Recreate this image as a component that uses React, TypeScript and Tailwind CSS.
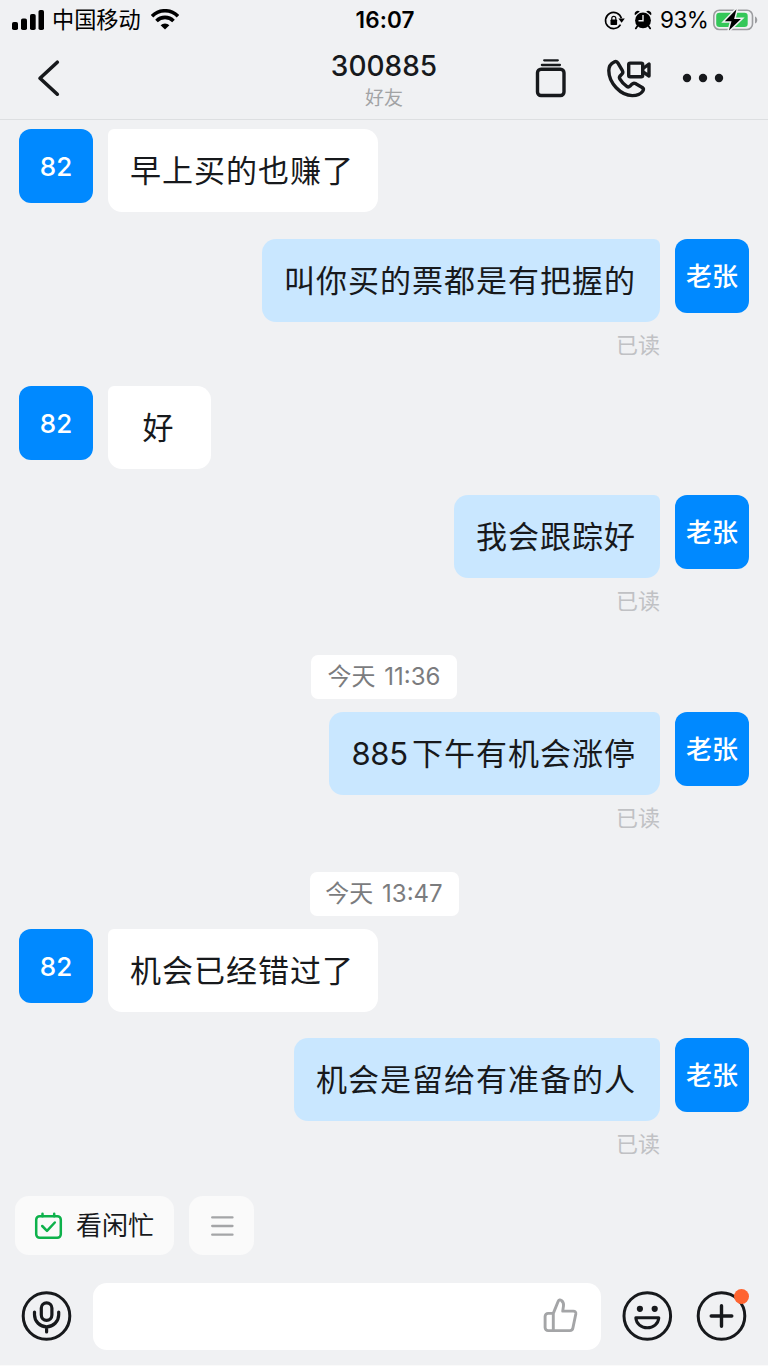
import type { ReactNode } from "react";

type ChatItem =
  | { kind: "time"; text: string; className: string }
  | { kind: "in" | "out"; text: ReactNode; className: string };

const items: ChatItem[] = [
  { kind: "in", text: "早上买的也赚了", className: "" },
  { kind: "out", text: "叫你买的票都是有把握的", className: "mt-[27px]" },
  { kind: "in", text: "好", className: "mt-[26px]" },
  { kind: "out", text: "我会跟踪好", className: "mt-[26px]" },
  { kind: "time", text: "今天 11:36", className: "mt-[39px] w-[146px]" },
  {
    kind: "out",
    text: (
      <>
        <span className="mr-[4px] tracking-[-0.2px]">885</span>下午有机会涨停
      </>
    ),
    className: "mt-[13px]",
  },
  { kind: "time", text: "今天 13:47", className: "mt-[39px] w-[149px]" },
  { kind: "in", text: "机会已经错过了", className: "mt-[13px]" },
  { kind: "out", text: "机会是留给有准备的人", className: "mt-[26px]" },
];

function Avatar({ children }: { children: ReactNode }) {
  return (
    <div className="flex h-[74px] w-[74px] shrink-0 justify-center rounded-[12px] bg-[#0089ff] pt-[20px] text-[26px] leading-[36px] font-medium text-white">
      {children}
    </div>
  );
}

function Message({ item }: { item: ChatItem }) {
  if (item.kind === "time") {
    return (
      <div
        className={`mx-auto flex h-[44px] items-center justify-center rounded-[7px] bg-white text-[24px] leading-[44px] whitespace-nowrap text-[#7b7c7e] [word-spacing:2px] ${item.className}`}
      >
        {item.text}
      </div>
    );
  }

  if (item.kind === "in") {
    return (
      <div className={`flex gap-[15px] ${item.className}`}>
        <Avatar>82</Avatar>
        <div className="h-[83px] min-w-[103px] rounded-[14px] rounded-tl-[6px] bg-white pr-[24px] pl-[22px] text-center text-[31px] leading-[84px] tracking-[1px] whitespace-nowrap">
          {item.text}
        </div>
      </div>
    );
  }

  return (
    <div className={`flex justify-end gap-[15px] ${item.className}`}>
      <div className="flex flex-col items-end">
        <div className="h-[83px] rounded-[14px] rounded-tr-[6px] bg-[#c9e7ff] pr-[24px] pl-[22px] text-[31px] leading-[84px] tracking-[1px] whitespace-nowrap">
          {item.text}
        </div>
        <span className="mt-[5px] h-[33px] text-[22px] leading-[36px] text-[#c0c1c4]">已读</span>
      </div>
      <Avatar>老张</Avatar>
    </div>
  );
}

function StatusBar() {
  return (
    <div className="flex h-[40px] items-center text-black">
      <div className="flex flex-1 items-center pl-[12px]">
        <svg width="32" height="22" viewBox="12 8 32 22">
          <rect x="12" y="21" width="6" height="8" rx="1.8" />
          <rect x="21" y="17.5" width="6" height="11.5" rx="1.8" />
          <rect x="30" y="13" width="5.7" height="16" rx="1.8" />
          <rect x="38.5" y="9" width="5.5" height="20" rx="1.8" />
        </svg>
        <span className="ml-[8px] text-[22.2px] leading-[38px]">中国移动</span>
        <svg className="ml-[10px]" width="28" height="22" viewBox="151 8 28 22" fill="none" stroke="currentColor">
          <path d="M152 15.2a18.2 18.2 0 0 1 26 0" strokeWidth="3.6" />
          <path d="M156.5 20a11.8 11.8 0 0 1 17 0" strokeWidth="3.6" />
          <path d="M160.6 24.3a6 6 0 0 1 8.8 0L165 28.6Z" fill="currentColor" stroke="none" />
        </svg>
      </div>
      <span className="text-[22.5px] leading-[38px] font-semibold tracking-[0.1px]">16:07</span>
      <div className="flex flex-1 items-center justify-end pr-[10px]">
        <svg width="22" height="22" viewBox="604 8 22 22" fill="none" stroke="currentColor">
          <path d="M621.4 17.3a8.1 8.1 0 1 0-.9 6.4" strokeWidth="1.6" />
          <path d="M618.400 17.500h6.400l-3.200 4.300Z" fill="currentColor" stroke="none" />
          <rect x="610.500" y="18.500" width="6.600" height="5.600" rx="0.800" fill="currentColor" stroke="none" />
          <path d="M611.800 19v-1.700a2 2 0 0 1 4 0V19" strokeWidth="1.200" />
        </svg>
        <svg className="ml-[8px]" width="18" height="22" viewBox="634 8 18 22">
          <circle cx="643" cy="19.400" r="7.900" />
          <path d="M635 14.200a3.100 3.100 0 0 1 4.800-3.700ZM651 14.200a3.100 3.100 0 0 0-4.800-3.700Z" />
          <path d="m637.600 24.800-1.800 2.600M648.400 24.800l1.800 2.600" stroke="currentColor" strokeWidth="1.800" strokeLinecap="round" />
          <path d="M643 14v5.800h-4.500" fill="none" stroke="#f0f1f3" strokeWidth="1.400" />
        </svg>
        <span className="ml-[8px] w-[48px] text-[22.5px] leading-[38px] tracking-[-0.5px]">93%</span>
        <svg className="ml-[4px]" width="46" height="24" viewBox="712 7 46 24">
          <rect x="713.8" y="9.3" width="38.7" height="19.2" rx="5.5" fill="none" stroke="#9c9da0" strokeWidth="1.6" />
          <path d="M755 15.5c3 1 3 6 0 7Z" fill="#9c9da0" />
          <rect x="716.2" y="11.8" width="31.5" height="14.2" rx="3.2" fill="#34c759" />
          <path d="m736.5 8.2-11.7 12h6.7l-2.6 9.4 12-11.500h-6.800Z" stroke="#f0f1f3" strokeWidth="3" />
          <path d="m736.500 8.200-11.700 12h6.700l-2.600 9.400 12-11.500h-6.800Z" />
        </svg>
      </div>
    </div>
  );
}

function Header() {
  return (
    <header className="flex h-[80px] border-b border-[#dddfe1]">
      <div className="w-[320px] pt-[18px] pl-[36px]">
        <svg width="26" height="40" viewBox="36 58 26 40" fill="none" stroke="currentColor" strokeWidth="3.600" strokeLinecap="round" strokeLinejoin="round">
          <path d="M57.300 62.200 40 78.200l17.300 16" />
        </svg>
      </div>
      <div className="flex w-[128px] flex-col items-center">
        <h1 className="mt-[7px] text-[28px] leading-[38px] font-medium">300885</h1>
        <p className="text-[19px] leading-[28px] text-[#a2a3a5]">好友</p>
      </div>
      <div className="flex flex-1 justify-end pt-[15px] pr-[43px]">
        <svg width="34" height="44" viewBox="534 55 34 44" fill="none" stroke="currentColor" strokeLinecap="round">
          <rect x="537.500" y="69.300" width="26.500" height="26.200" rx="3.500" strokeWidth="3.400" />
          <path d="M544.200 60.300h13.600M541.900 65h18" strokeWidth="2.300" />
        </svg>
        <svg className="ml-[36px]" width="50" height="44" viewBox="604 55 50 44" fill="none" stroke="currentColor" strokeWidth="3.400" strokeLinecap="round" strokeLinejoin="round">
          <path d="M614.200 62c-3.300 1.600-5.400 4.600-5.400 8.600 0 12.500 12 25 23.500 25 4.800 0 8.400-1.500 10.500-4.500.9-1.300.6-2.800-.6-3.700l-6.800-3.800c-1.200-.7-2.500-.4-3.500.6l-1.800 1.900c-1 .9-2.200 1.100-3.300.3-2.900-2-5.300-4.600-7-7.500-.6-1-.5-2 .3-2.900l2-2.200c.8-.9.9-2 .3-3.100l-4.400-7.500c-.8-1.400-2.400-1.900-3.800-1.200Z" />
          <rect x="628.700" y="63.100" width="14" height="13.600" rx="1.500" />
          <path d="m643 68.500 6-4.500v12l-6-4.200" />
        </svg>
        <svg className="ml-[27px]" width="44" height="44" viewBox="681 55 44 44" fill="currentColor">
          <circle cx="687" cy="78" r="4.200" />
          <circle cx="703" cy="78" r="4.200" />
          <circle cx="719" cy="78" r="4.200" />
        </svg>
      </div>
    </header>
  );
}

function Shortcuts() {
  return (
    <div className="flex h-[59px] gap-[15px] pl-[15px]">
      <button className="flex w-[159px] items-center rounded-[14px] bg-[#fafafa] pl-[18px]">
        <svg width="30" height="30" viewBox="33 1211 30 30" fill="none" stroke="#0db14b" strokeWidth="2.500" strokeLinecap="round" strokeLinejoin="round">
          <rect x="36.200" y="1216.200" width="24.600" height="21.600" rx="3.500" />
          <path d="M42.500 1213.800v2.500M54.200 1213.800v2.500M42.200 1226l4.800 4.800 7.800-8.300" />
        </svg>
        <span className="ml-[13px] text-[26px] leading-[59px] whitespace-nowrap">看闲忙</span>
      </button>
      <button className="flex w-[65px] items-center justify-center rounded-[14px] bg-[#fafafa]">
        <svg width="24" height="24" viewBox="0 0 24 24" stroke="#a4a5a7" strokeWidth="2.300" strokeLinecap="round">
          <path d="M2.200 3.400h20.300M2.200 12h20.300M2.200 20.700h20.300" />
        </svg>
      </button>
    </div>
  );
}

function InputBar() {
  return (
    <div className="flex items-start pl-[20px]">
      <svg className="mt-[7px]" width="52" height="52" viewBox="20 1290 52 52" fill="none" stroke="currentColor" strokeWidth="3.200" strokeLinecap="round">
        <circle cx="46.500" cy="1316" r="23.300" strokeWidth="3" />
        <rect x="41.300" y="1302.800" width="10.600" height="17.500" rx="5.300" />
        <path d="M34.500 1312v2.700a12.100 12.100 0 0 0 24.200 0V1312M46.600 1327v5" />
      </svg>
      <div className="ml-[21px] flex h-[67px] w-[508px] justify-end rounded-[14px] bg-white pt-[14px] pr-[22px]">
        <svg width="38" height="38" viewBox="541 1297 38 38" fill="none" stroke="#a4a5a7" strokeWidth="2.900" strokeLinejoin="round">
          <path d="M553.300 1313.400h-5.200a3 3 0 0 0-3 3v11.200a3 3 0 0 0 3 3h5.200ZM553.300 1313.400l4.900-12.200c.6-1.500 2.100-1.600 3.200-.7 1.700 1.300 2.400 3.200 2.100 5.400l-.8 5.200h10.600c1.800 0 2.800 1.200 2.500 2.900l-2.900 14c-.3 1.700-1.400 2.600-3 2.600h-16.600" />
        </svg>
      </div>
      <svg className="mt-[7px] ml-[20px]" width="52" height="52" viewBox="621 1290 52 52" fill="none" stroke="currentColor" strokeWidth="3" strokeLinejoin="round">
        <circle cx="647.300" cy="1316" r="23.300" />
        <circle cx="639.900" cy="1308.800" r="3.100" fill="currentColor" stroke="none" />
        <circle cx="654.700" cy="1308.800" r="3.100" fill="currentColor" stroke="none" />
        <path d="M635.800 1317.800h23c-.5 6-5.500 10-11.500 10s-11-4-11.500-10Z" />
      </svg>
      <div className="relative mt-[7px] ml-[22px]">
        <svg width="52" height="52" viewBox="695 1290 52 52" fill="none" stroke="currentColor" strokeWidth="3" strokeLinecap="round">
          <circle cx="721.500" cy="1316" r="23.300" />
          <path d="M711.200 1316h20.600M721.500 1305.700v20.600" strokeWidth="3.400" />
        </svg>
        <span className="absolute top-[-1px] right-[-2px] h-[15px] w-[15px] rounded-full bg-[#ff6430]" />
      </div>
    </div>
  );
}

export default function App() {
  return (
    <div className="flex h-[1366px] w-[768px] flex-col overflow-hidden border-b border-[#fafafa] bg-[#f0f1f3] font-['Inter','Noto_Sans_CJK_SC',sans-serif] text-[#17191c]">
      <StatusBar />
      <Header />
      <main className="h-[1076px] px-[19px] pt-[9px]">
        {items.map((item, index) => (
          <Message key={index} item={item} />
        ))}
      </main>
      <Shortcuts />
      <div className="pt-[28px]">
        <InputBar />
      </div>
    </div>
  );
}
